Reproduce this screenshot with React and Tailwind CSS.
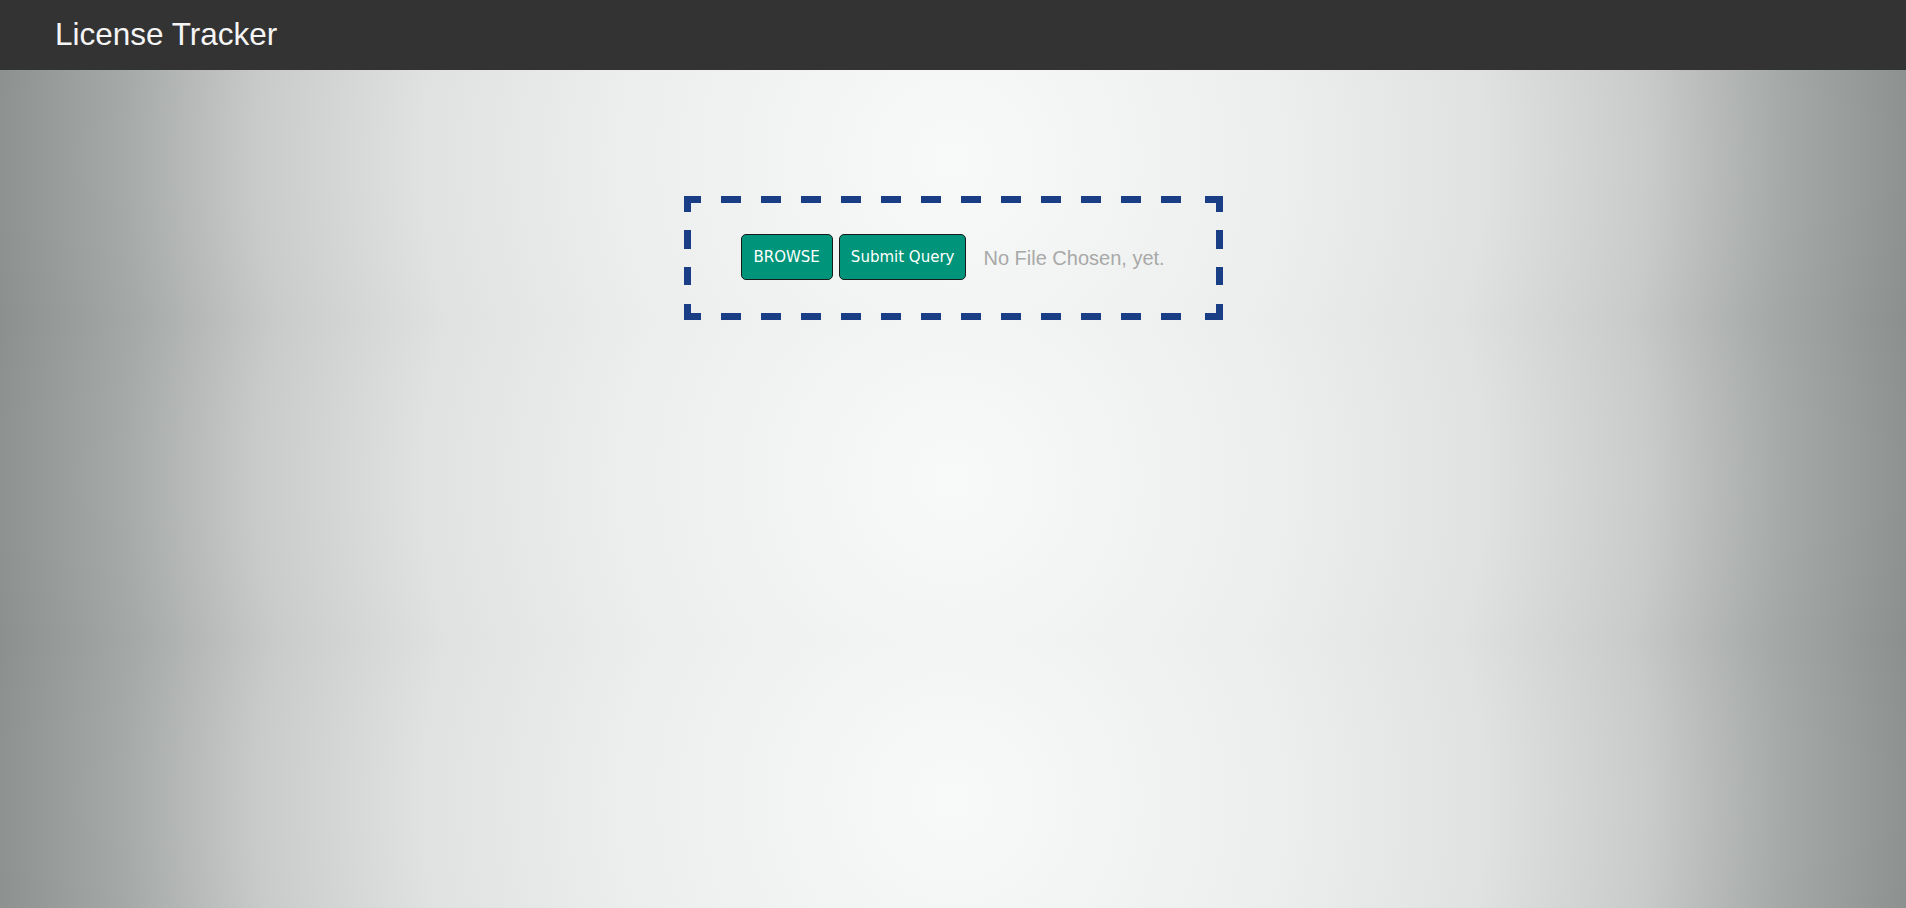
import React, { useState } from 'react';

// dashed frame drawn as svg so the dash rhythm matches (20px dashes, 40px period)
const BOX_W = 539;
const BOX_H = 124;
const T = 7;
const C = '#1a3e85';

const DashedFrame = () => {
    const across = Array.from({ length: 12 }, (_, i) => 37 + i * 40);
    const sides = [[34, 19], [71, 18]];
    return (
        <svg
            className="absolute inset-0 pointer-events-none"
            width={BOX_W}
            height={BOX_H}
            viewBox={`0 0 ${BOX_W} ${BOX_H}`}
        >
            {/* corners */}
            <path d={`M0 0H17V${T}H${T}V16H0Z`} fill={C} />
            <path d={`M${BOX_W} 0V16H${BOX_W - T}V${T}H${BOX_W - 18}V0Z`} fill={C} />
            <path d={`M0 ${BOX_H}V108H${T}V${BOX_H - T}H17V${BOX_H}Z`} fill={C} />
            <path d={`M${BOX_W} ${BOX_H}H${BOX_W - 18}V${BOX_H - T}H${BOX_W - T}V108H${BOX_W}Z`} fill={C} />
            {across.map((x) => (
                <g key={x}>
                    <rect x={x} y={0} width={20} height={T} fill={C} />
                    <rect x={x} y={BOX_H - T} width={20} height={T} fill={C} />
                </g>
            ))}
            {sides.map(([y, h]) => (
                <g key={y}>
                    <rect x={0} y={y} width={T} height={h} fill={C} />
                    <rect x={BOX_W - T} y={y} width={T} height={h} fill={C} />
                </g>
            ))}
        </svg>
    );
};

const App = () => {
    const [fileName] = useState(null);

    return (
        <div className="min-h-screen bg-[radial-gradient(circle,#f8faf9_0%,#eceeed_35%,#e0e2e1_55%,#c9cbca_72%,#a5a9a8_86%,#8b908e_100%)] bg-[length:100%_320px] bg-repeat">
            {/* Top bar */}
            <header className="h-[70px] bg-[#333333] flex items-center pl-[55px]">
                <h1 className="text-[31.5px] text-[#f5f5f5] font-['Liberation_Sans',Arial,sans-serif] font-normal">
                    License Tracker
                </h1>
            </header>

            {/* Upload drop zone */}
            <div className="flex justify-center pt-[126px]">
                <form className="relative w-[539px] h-[124px] flex items-center px-[57px] pb-[2px]">
                    <DashedFrame />
                    <button
                        type="button"
                        className="shrink-0 whitespace-nowrap h-[46px] px-3 rounded-[5px] border border-[#1a1a1a] bg-[#00957a] text-white text-[15px] font-['DejaVu_Sans',Verdana,sans-serif]"
                    >
                        BROWSE
                    </button>
                    <button
                        type="submit"
                        className="shrink-0 whitespace-nowrap ml-[6px] h-[46px] px-[11px] rounded-[5px] border border-[#1a1a1a] bg-[#00957a] text-white text-[15px] font-['DejaVu_Sans',Verdana,sans-serif]"
                    >
                        Submit Query
                    </button>
                    <span className="ml-[17px] mt-[2px] text-[20px] text-[#a8a8a8] font-['Liberation_Sans',Arial,sans-serif] whitespace-nowrap">
                        {fileName || 'No File Chosen, yet.'}
                    </span>
                </form>
            </div>
        </div>
    );
};

export default App;
